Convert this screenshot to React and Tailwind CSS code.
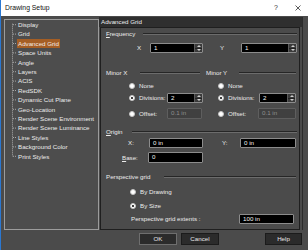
import React from 'react';

const treeItems = [
  'Display',
  'Grid',
  'Advanced Grid',
  'Space Units',
  'Angle',
  'Layers',
  'ACIS',
  'RedSDK',
  'Dynamic Cut Plane',
  'Geo-Location',
  'Render Scene Environment',
  'Render Scene Luminance',
  'Line Styles',
  'Background Color',
  'Print Styles',
];

const Spin = () => (
  <div className="flex flex-col w-[8px] h-full bg-[#3a3a3a] border-l border-[#5a5a5a]">
    <div className="flex-1 flex items-center justify-center">
      <svg width="4" height="2" viewBox="0 0 4 2">
        <path d="M0 2L2 0L4 2Z" fill="#d0d0d0" />
      </svg>
    </div>
    <div className="flex-1 flex items-center justify-center border-t border-[#222]">
      <svg width="4" height="2" viewBox="0 0 4 2">
        <path d="M0 0L2 2L4 0Z" fill="#d0d0d0" />
      </svg>
    </div>
  </div>
);

const Field = ({ className = '', value, spin, disabled }) => (
  <div
    className={
      'flex h-full border rounded-[1px] ' +
      (disabled ? 'bg-[#404040] border-[#5e5e5e] text-[#8e8e8e] ' : 'bg-black border-[#8c8c8c] text-[#f2f2f2] ') +
      className
    }
  >
    <span className="flex-1 flex items-center pl-[3px] leading-none">{value}</span>
    {spin && <Spin />}
  </div>
);

const Radio = ({ checked }) => (
  <span className="w-[6px] h-[6px] rounded-full bg-white border border-[#c4c4c4] flex items-center justify-center shrink-0">
    {checked && <span className="w-[2px] h-[2px] rounded-full bg-black" />}
  </span>
);

const Line = ({ className = '' }) => (
  <div className={'flex-1 h-[2px] border-t border-b border-[#262626] border-b-[#6c6c6c] ' + className} />
);

const Button = ({ children, className = '' }) => (
  <div
    className={
      'h-[12px] flex items-center justify-center bg-[#2b2b2b] border border-[#1b1b1b] text-[#e6e6e6] ' + className
    }
  >
    {children}
  </div>
);

export default function App() {
  const rowH = 9.4;

  return (
    <div className="w-[308px] h-[250px] flex flex-col bg-[#4b4b4b] border-l border-[#2b78d2] overflow-hidden font-['Liberation_Sans',Arial,sans-serif] text-[6.2px] text-[#ececec]">
      {/* Title bar */}
      <div className="h-[16px] bg-white flex items-center pl-[4px] pr-[7px] text-[#111] text-[6.8px]">
        <span>Drawing Setup</span>
        <span className="ml-auto text-[7px] text-[#333]">?</span>
        <svg className="ml-[17px]" width="6" height="6" viewBox="0 0 6 6">
          <path d="M0.5 0.5L5.5 5.5M5.5 0.5L0.5 5.5" stroke="#333" strokeWidth="0.8" />
        </svg>
      </div>

      {/* Main area */}
      <div className="h-[214px] flex">
        {/* Tree */}
        <div className="mt-[3px] ml-[3px] w-[95px] h-[211px] border border-[#9c9c9c] bg-[#4d4d4d] flex pl-[4px]">
          <svg width="8" height={rowH * treeItems.length} className="shrink-0">
            <line
              x1="3.5"
              y1={rowH / 2 - 1}
              x2="3.5"
              y2={rowH * (treeItems.length - 0.5)}
              stroke="#a8a8a8"
              strokeWidth="1"
              strokeDasharray="1 1"
            />
            {treeItems.map((_, i) => (
              <line
                key={i}
                x1="4"
                y1={rowH * (i + 0.5)}
                x2="8"
                y2={rowH * (i + 0.5)}
                stroke="#a8a8a8"
                strokeWidth="1"
                strokeDasharray="1 1"
              />
            ))}
          </svg>
          <div className="flex flex-col">
            {treeItems.map((item) => (
              <div key={item} className="h-[9.4px] flex items-center">
                <span
                  className={
                    'h-full flex items-center px-[1px] whitespace-nowrap ' +
                    (item === 'Advanced Grid' ? 'bg-[#a55e24] text-[#f4ece4]' : '')
                  }
                >
                  {item}
                </span>
              </div>
            ))}
          </div>
        </div>

        {/* Right panel */}
        <div className="mt-[1px] w-[204px] flex flex-col border-r border-[#2c2c2c]">
          <div className="h-[10px] bg-[#2f2f2f] flex items-center pl-[2px] text-[#ececec]">Advanced Grid</div>
          <div className="ml-[1px] w-[200px] h-[203px] border border-[#1f1f1f] flex flex-col pl-[5px] pr-[2px]">
            {/* Frequency */}
            <div className="mt-[1px] h-[9px] flex items-center">
              <span>
                <span className="underline">F</span>requency
              </span>
              <Line className="ml-[8px]" />
            </div>
            <div className="mt-[5px] h-[10px] flex items-center">
              <span className="ml-[31px] w-[13px]">X</span>
              <Field className="w-[53px]" value="1" spin />
              <span className="w-[38px] text-center">Y</span>
              <Field className="w-[56px]" value="1" spin />
            </div>

            {/* Minor X / Minor Y */}
            <div className="mt-[15px] flex gap-[3px]">
              <div className="w-[97px] flex flex-col">
                <div className="h-[9px] flex items-center">
                  <span>Minor X</span>
                  <Line className="ml-[13px] mr-[3px]" />
                </div>
                <div className="mt-[4px] h-[9px] flex items-center pl-[23px] gap-[4px]">
                  <Radio />
                  <span>None</span>
                </div>
                <div className="mt-[3px] h-[10px] flex items-center pl-[23px] gap-[4px]">
                  <Radio checked />
                  <span className="w-[24px]">Divisions:</span>
                  <Field className="w-[36px]" value="2" spin />
                </div>
                <div className="mt-[5px] h-[11px] flex items-center pl-[23px] gap-[4px]">
                  <Radio />
                  <span className="w-[24px]">Offset:</span>
                  <Field className="w-[35px]" value="0.1 in" disabled />
                </div>
              </div>
              <div className="w-[91px] flex flex-col">
                <div className="h-[9px] flex items-center">
                  <span>Minor Y</span>
                  <Line className="ml-[12px] mr-[1px]" />
                </div>
                <div className="mt-[4px] h-[9px] flex items-center pl-[12px] gap-[4px]">
                  <Radio />
                  <span>None</span>
                </div>
                <div className="mt-[3px] h-[10px] flex items-center pl-[12px] gap-[4px]">
                  <Radio checked />
                  <span className="w-[27px]">Divisions:</span>
                  <Field className="w-[37px]" value="2" spin />
                </div>
                <div className="mt-[5px] h-[11px] flex items-center pl-[12px] gap-[4px]">
                  <Radio />
                  <span className="w-[26px]">Offset:</span>
                  <Field className="w-[38px]" value="0.1 in" disabled />
                </div>
              </div>
            </div>

            {/* Origin */}
            <div className="mt-[8px] h-[9px] flex items-center">
              <span>
                <span className="underline">O</span>rigin
              </span>
              <Line className="ml-[9px]" />
            </div>
            <div className="mt-[2px] h-[10px] flex items-center">
              <span className="ml-[22px] w-[21px]">X:</span>
              <Field className="w-[54px]" value="0 in" />
              <span className="ml-[19px] w-[18px]">Y:</span>
              <Field className="w-[56px]" value="0 in" />
            </div>
            <div className="mt-[4px] h-[11px] flex items-center">
              <span className="ml-[16px] w-[26px]">
                <span className="underline">B</span>ase:
              </span>
              <Field className="w-[55px]" value="0" />
            </div>

            {/* Perspective grid */}
            <div className="mt-[9px] h-[10px] flex items-center">
              <span>Perspective grid</span>
              <Line className="ml-[14px] mr-[1px]" />
            </div>
            <div className="mt-[5px] h-[10px] flex items-center pl-[24px] gap-[4px]">
              <Radio />
              <span>By Drawing</span>
            </div>
            <div className="mt-[4px] h-[10px] flex items-center pl-[24px] gap-[4px]">
              <Radio checked />
              <span>By Size</span>
            </div>
            <div className="mt-[3px] h-[10px] flex items-center">
              <span className="ml-[25px] w-[108px]">Perspective grid extents :</span>
              <Field className="w-[55px]" value="100 in" />
            </div>
          </div>
        </div>
      </div>

      {/* Buttons */}
      <div className="mt-[3px] flex">
        <Button className="ml-[138px] w-[38px] border-[#6e6e6e]">OK</Button>
        <Button className="ml-[4px] w-[38px]">Cancel</Button>
        <Button className="ml-[46px] w-[37px]">Help</Button>
      </div>
    </div>
  );
}
